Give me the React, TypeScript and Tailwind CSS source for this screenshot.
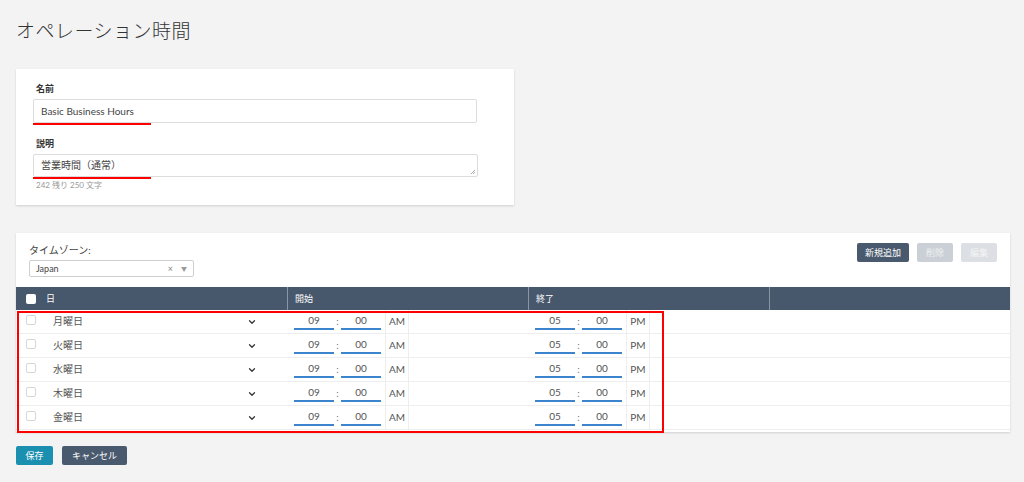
import { ChevronDown } from "lucide-react";

const DAYS = ["月曜日", "火曜日", "水曜日", "木曜日", "金曜日"];

const FONT = { fontFamily: "Lato, 'Noto Sans CJK JP', sans-serif" };

function TimeGroup({ hour, minute, ampm }: { hour: string; minute: string; ampm: string }) {
  return (
    <div className="flex items-stretch h-full pl-[6px]">
      <div className="w-[40px] flex items-center justify-center border-b-2 border-[#3d84cf] my-[3px] text-[10px] text-[#555]">
        {hour}
      </div>
      <div className="w-[7px] flex items-center justify-center text-[10px] text-[#777]">:</div>
      <div className="w-[40px] flex items-center justify-center border-b-2 border-[#3d84cf] my-[3px] text-[10px] text-[#555]">
        {minute}
      </div>
      <div className="ml-[4px] w-[24px] flex items-center justify-center border-x border-[#eeeeee] text-[10px] text-[#555]">
        {ampm}
      </div>
    </div>
  );
}

export default function App() {
  return (
    <div className="min-h-[482px] w-full bg-[#f3f3f3] px-4 pt-[18px] pb-4 text-[#333]" style={FONT}>
      <h1 className="text-[19px] leading-[26px] font-light text-[#333] tracking-[0.5px]">
        オペレーション時間
      </h1>

      {/* name / description card */}
      <div className="mt-[25px] w-[498px] bg-white shadow-[0_1px_2px_rgba(0,0,0,0.15)] pl-[17px] pt-[13px] pb-[14px]">
        <label className="block ml-[3px] text-[9px] font-bold leading-[14px]">名前</label>
        <div className="relative mt-[3px] w-[444px]">
          <div className="h-[24px] border border-[#dcdcdc] rounded-[2px] px-[7px] flex items-center text-[10px] text-[#444]">
            Basic Business Hours
          </div>
          <div className="absolute left-0 -bottom-[2px] w-[118px] h-[2px] bg-[#ff0000]" />
        </div>

        <label className="block ml-[3px] mt-[14px] text-[9px] font-bold leading-[14px]">説明</label>
        <div className="relative mt-[3px] w-[445px]">
          <div className="relative h-[23px] border border-[#dcdcdc] rounded-[2px] px-[7px] flex items-center text-[10px] text-[#444]">
            営業時間（通常）
            <svg className="absolute right-[1px] bottom-[1px]" width="6" height="6" viewBox="0 0 6 6">
              <path d="M1 5 L5 1 M3 5 L5 3" stroke="#999" strokeWidth="0.8" />
            </svg>
          </div>
          <div className="absolute left-0 -bottom-[2px] w-[118px] h-[2px] bg-[#ff0000]" />
        </div>
        <div className="ml-[3px] mt-[2px] text-[8px] leading-[12px] text-[#999]">242 残り 250 文字</div>
      </div>

      {/* hours card */}
      <div className="relative mt-[28px] w-[994px] bg-white shadow-[0_1px_2px_rgba(0,0,0,0.15)] pb-[2px]">
        <div className="flex justify-between px-[13px] pt-[10px] h-[54px]">
          <div>
            <div className="text-[10px] leading-[14px] text-[#444]">タイムゾーン:</div>
            <div className="mt-[3px] w-[165px] h-[17px] border border-[#cfcfcf] rounded-[2px] flex items-center px-[6px] text-[9px] text-[#444]">
              <span className="flex-1">Japan</span>
              <span className="text-[9px] text-[#888] mr-[8px]">×</span>
              <span className="text-[6px] text-[#999]">▼</span>
            </div>
          </div>
          <div className="flex gap-[8px] pt-0">
            <button className="h-[19px] px-[8px] rounded-[2px] bg-[#4a5a6e] text-white text-[9px]">新規追加</button>
            <button className="h-[19px] w-[36px] rounded-[2px] bg-[#cbd0d6] text-[#eef0f2] text-[9px]">削除</button>
            <button className="h-[19px] w-[36px] rounded-[2px] bg-[#dcdfe3] text-[#f3f4f5] text-[9px]">編集</button>
          </div>
        </div>

        <div className="grid grid-cols-[272px_241px_241px_1fr] h-[23px] bg-[#47586c] text-white text-[9px]">
          <div className="flex items-center pl-[10px] border-r border-[#8795a5]">
            <span className="w-[10px] h-[10px] rounded-[2px] bg-white" />
            <span className="ml-[10px]">日</span>
          </div>
          <div className="flex items-center pl-[7px] border-r border-[#8795a5]">開始</div>
          <div className="flex items-center pl-[7px] border-r border-[#8795a5]">終了</div>
          <div />
        </div>

        {DAYS.map((d) => (
          <div
            key={d}
            className="grid grid-cols-[272px_241px_241px_1fr] h-[24px] border-b border-[#eeeeee] text-[10px] text-[#555]"
          >
            <div className="flex items-center pl-[10px]">
              <span className="w-[10px] h-[10px] rounded-[2px] border border-[#d6d6d6] -mt-[4px]" />
              <span className="ml-[17px] flex-1">{d}</span>
              <ChevronDown className="mr-[31px] w-[10px] h-[10px] text-[#333]" strokeWidth={3} />
            </div>
            <TimeGroup hour="09" minute="00" ampm="AM" />
            <TimeGroup hour="05" minute="00" ampm="PM" />
            <div />
          </div>
        ))}

        {/* annotation */}
        <div className="absolute left-[1px] top-[78px] w-[647px] h-[122px] border-2 border-[#ff0000] pointer-events-none" />
      </div>

      <div className="mt-[14px] flex gap-[9px]">
        <button className="h-[19px] w-[37px] rounded-[2px] bg-[#1b8fb0] text-white text-[9px]">保存</button>
        <button className="h-[19px] w-[65px] rounded-[2px] bg-[#4a5a6e] text-white text-[9px]">キャンセル</button>
      </div>
    </div>
  );
}
